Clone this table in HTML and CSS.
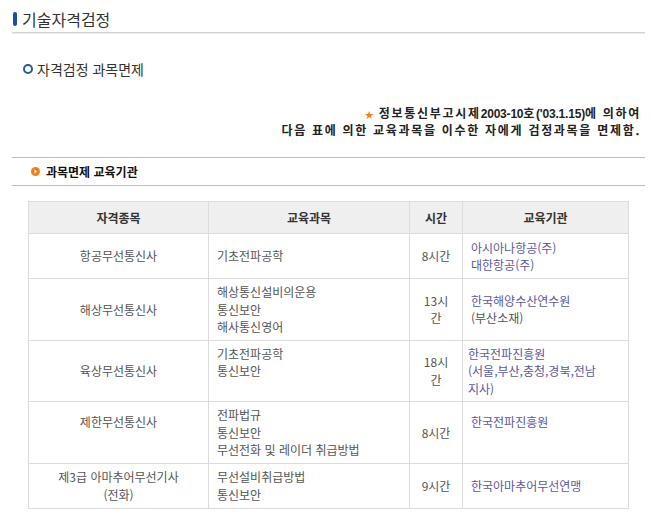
FILE: index.html
```html
<!DOCTYPE html>
<html lang="ko">
<head>
<meta charset="utf-8">
<title>기술자격검정</title>
<link rel="stylesheet" href="styles.css">
</head>
<body>
<div class="page">
  <h1 class="title"><span class="bar"></span>기술자격검정</h1>
  <h2 class="sub"><span class="ring"></span>자격검정 과목면제</h2>
  <p class="notice">
    <span class="star">★</span> 정보통신부고시제<span class="num">2003-10</span>호<span class="num">('03.1.15)</span>에 의하여<br>
    다음 표에 의한 교육과목을 이수한 자에게 검정과목을 면제함.
  </p>
  <div class="section">
    <svg class="arrow" width="9" height="9" viewBox="0 0 9 9"><circle cx="4.5" cy="4.5" r="4.5" fill="#f07f1b"/><path d="M3.5 2.5 L6 4.5 L3.5 6.5 Z" fill="#fff"/></svg>
    <span>과목면제 교육기관</span>
  </div>
  <table class="grid">
    <colgroup>
      <col class="c1"><col class="c2"><col class="c3"><col class="c4">
    </colgroup>
    <thead>
      <tr><th>자격종목</th><th>교육과목</th><th>시간</th><th>교육기관</th></tr>
    </thead>
    <tbody>
      <tr>
        <td class="center">항공무선통신사</td>
        <td>기초전파공학</td>
        <td class="center">8시간</td>
        <td><a>아시아나항공(주)</a><br><a>대한항공(주)</a></td>
      </tr>
      <tr class="tall">
        <td class="center">해상무선통신사</td>
        <td>해상통신설비의운용<br>통신보안<br>해사통신영어</td>
        <td class="center">13시<br>간</td>
        <td><a>한국해양수산연수원</a><br>(부산소재)</td>
      </tr>
      <tr class="tall">
        <td class="center">육상무선통신사</td>
        <td class="top">기초전파공학<br>통신보안</td>
        <td class="center">18시<br>간</td>
        <td class="tight"><a>한국전파진흥원<br>(서울,부산,충청,경북,전남<br>지사)</a></td>
      </tr>
      <tr class="tall">
        <td class="center upper">제한무선통신사</td>
        <td>전파법규<br>통신보안<br>무선전화 및 레이더 취급방법</td>
        <td class="center">8시간</td>
        <td class="upper"><a>한국전파진흥원</a></td>
      </tr>
      <tr>
        <td class="center">제3급 아마추어무선기사<br>(전화)</td>
        <td>무선설비취급방법<br>통신보안</td>
        <td class="center">9시간</td>
        <td><a>한국아마추어무선연맹</a></td>
      </tr>
    </tbody>
  </table>
</div>
</body>
</html>
```
FILE: styles.css
```css
html, body {
  margin: 0;
  padding: 0;
  background: #fff;
}
body {
  font-family: "Noto Sans CJK KR", "Noto Sans", sans-serif;
  color: #444;
  font-size: 12px;
}
.page {
  width: 651px;
}
.title {
  margin: 0 6px 0 12px;
  height: 33px;
  box-sizing: border-box;
  padding-top: 5px;
  display: flex;
  align-items: center;
  font-size: 16px;
  font-weight: normal;
  color: #333;
  border-bottom: 1px solid #d4d4d4;
  box-shadow: 0 1px 0 #ececec;
}
.bar {
  width: 4px;
  height: 14px;
  border-radius: 2px;
  background: #1d4f9c;
  margin: 0 5px 0 1px;
}
.sub {
  margin: 27px 0 0 23px;
  height: 18px;
  display: flex;
  align-items: center;
  font-size: 14px;
  font-weight: normal;
  color: #333;
}
.ring {
  width: 6px;
  height: 6px;
  border: 2px solid #1f5d9e;
  border-radius: 50%;
  margin-right: 4px;
}
.notice {
  margin: 27px 10px 0 0;
  text-align: right;
  font-weight: bold;
  font-size: 12px;
  line-height: 15px;
  letter-spacing: 1.7px;
  color: #222;
}
.notice .num {
  font-family: "Liberation Sans", sans-serif;
  letter-spacing: -0.2px;
}
.star {
  color: #f07f1b;
  font-size: 9px;
  letter-spacing: 0;
}
.section {
  margin: 20px 6px 0 12px;
  height: 29px;
  box-sizing: border-box;
  border-top: 1px solid #bdbdbd;
  border-bottom: 1px solid #bdbdbd;
  display: flex;
  align-items: center;
  padding-left: 19px;
  font-weight: bold;
  font-size: 12px;
  color: #111;
}
.arrow {
  margin-right: 6px;
}
.grid {
  margin: 15px 0 0 28px;
  width: 600px;
  border-collapse: collapse;
  table-layout: fixed;
}
.c1 { width: 180px; }
.c2 { width: 201px; }
.c3 { width: 53px; }
.c4 { width: 166px; }
.grid th {
  background: #efefef;
  height: 29px;
  border: 1px solid #dcdcdc;
  font-weight: bold;
  color: #333;
  font-size: 12px;
}
.grid td {
  border: 1px solid #dcdcdc;
  padding: 4px 8px;
  line-height: 17.5px;
  height: 36px;
  color: #555;
  vertical-align: middle;
}
.grid tr.tall td {
  height: 52px;
}
.grid td.center {
  text-align: center;
  padding: 4px 2px;
}
.grid td.top {
  vertical-align: top;
}
.grid tr.tall td.upper {
  vertical-align: top;
  padding-top: 11px;
  height: 45px;
}
.grid td.tight {
  padding-left: 5px;
}
.grid a {
  color: #5a58a0;
}
```
